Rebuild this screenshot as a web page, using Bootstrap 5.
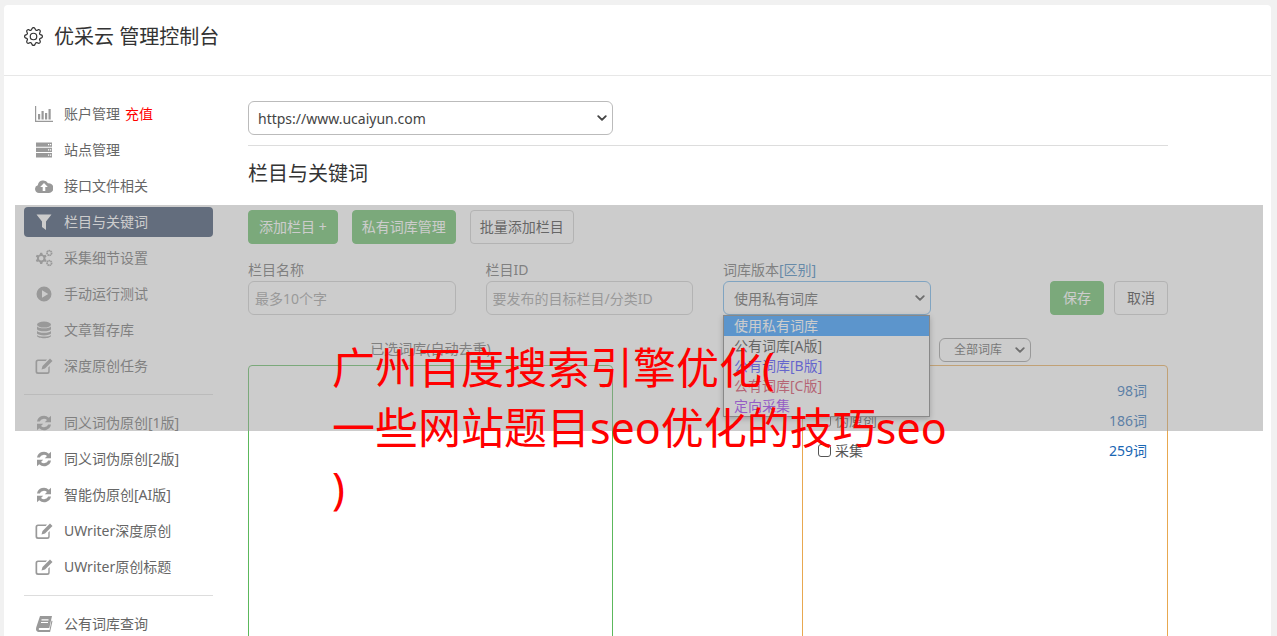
<!DOCTYPE html>
<html lang="zh-CN">
<head>
    <meta charset="UTF-8">
    <title>优采云 管理控制台</title>
    <link href="https://cdn.jsdelivr.net/npm/bootstrap@5.3.2/dist/css/bootstrap.min.css" rel="stylesheet">
    <style>
        html, body { height: 100%; overflow: hidden; }
        body { background: #f1f1f1; font-family: "Noto Sans", "Noto Sans CJK SC", sans-serif; font-size: 14px; color: #555; }
        .shell { position: relative; height: 636px; overflow: hidden; padding: 5px 6px 0 4px; }
        .panel { background: #fff; border-radius: 4px 4px 0 0; height: 700px; }
        .panel-top { height: 71px; border-bottom: 1px solid #e7e7e7; padding: 0 0 6px 20px; font-size: 20px; color: #333; }
        .panel-top svg { width: 19px; height: 19px; margin-right: 11px; margin-top: -2px; }
        .side { width: 189px; margin-left: 20px; padding-top: 23px; }
        .side .nav-link { height: 30px; margin-bottom: 6px; padding: 0 0 2px 11px; border-radius: 4px; color: #666; font-size: 14px; display: flex; align-items: center; }
        .side .nav-link svg { width: 18px; height: 18px; margin-right: 11px; margin-top: 2px; fill: #999; flex: none; }
        .side .nav-link.active { background: #2c4060; color: #fff; }
        .side .nav-link.active svg { fill: #fff; }
        .side .recharge { color: #f00; margin-left: 5px; }
        .side-rule { height: 1px; background: #ddd; margin: 7px 0 13px; }
        .main-area { width: 920px; margin-left: 35px; padding-top: 25px; }
        .form-select { background-image: url("data:image/svg+xml,%3csvg xmlns='http://www.w3.org/2000/svg' viewBox='0 0 16 16'%3e%3cpath fill='none' stroke='%23444' stroke-linecap='round' stroke-linejoin='round' stroke-width='3' d='m2 5 6 6 6-6'/%3e%3c/svg%3e"); background-size: 10px 10px; background-position: right 5px center; }
        .site-select { width: 365px; height: 34px; padding: 0 9px; font-size: 14px; color: #444; border-color: #bbb; }
        .main-rule { height: 1px; background: #ddd; margin-top: 10px; }
        .main-title { font-size: 20px; line-height: 28px; color: #333; margin: 14px 0 22px; font-weight: 400; }
        .act-row { gap: 14px; }
        .act-btn { height: 34px; padding: 0 9px; font-size: 14px; line-height: 32px; border-radius: 4px; }
        .act-first { padding: 0 10px; }
        .act-wide { padding: 0 12px; }
        .act-pair { gap: 10px; }
        .act-green { background: #5cb85c; border-color: #5cb85c; color: #fff; }
        .act-plain { background: #fff; border-color: #ccc; color: #333; }
        .field-row { margin-top: 16px; }
        .field-box { width: 207.5px; margin-right: 30px; }
        .field-box label { display: block; line-height: 20px; margin-bottom: 1px; color: #666; }
        .field-box label span { color: #337ab7; }
        .field-input { height: 34px; padding: 0 6px; font-size: 14px; border-color: #ccc; color: #555; }
        .field-input::placeholder { color: #999; }
        select.field-input { padding: 0 10px; }
        .field-open { border-color: #66afe9; }
        .dict-cols { margin-top: 23px; }
        .dict-col { width: 365px; }
        .dict-wide { width: 366px; }
        .dict-head { height: 27px; line-height: 22px; text-align: center; color: #666; }
        .dict-filter { width: 92px; height: 24px; margin-left: 137px; padding: 0 4px 0 14px; font-size: 12px; border-color: #999; color: #555; }
        .dict-box { height: 400px; border: 1px solid; border-radius: 4px; padding: 9px 20px 0 15px; }
        .dict-green { border-color: #5cb85c; }
        .dict-orange { border-color: #e8a850; }
        .dict-item { height: 30px; }
        .dict-item .tick { width: 13px; height: 13px; border: 1px solid #555; border-radius: 3px; margin-right: 4px; }
        .dict-item .count { color: #1a66b3; margin-left: auto; }
        .opt-list { position: absolute; left: 723px; top: 315px; width: 207px; height: 102px; background: #fff; border: 1px solid #767676; box-shadow: 0 2px 6px rgba(0,0,0,.35); }
        .opt-list div { height: 20px; line-height: 20px; padding-left: 10px; color: #333; }
        .opt-list .opt-on { background: #1e90ff; color: #fff; }
        .opt-list .opt-b { color: #3030ff; }
        .opt-list .opt-c { color: #d03050; }
        .opt-list .opt-d { color: #9020f0; }
        .dim-layer { position: absolute; left: 15px; top: 205px; width: 1248px; height: 226px; background: rgba(153,153,153,.5); }
        .big-title { position: absolute; left: 332px; top: 338px; width: 640px; font-size: 43px; line-height: 60px; color: #f00; }
    </style>
</head>
<body>
    <svg width="0" height="0" class="d-block position-absolute">
        <symbol id="i-chart" viewBox="0 0 18 18"><path d="M0 1h1.200v14.800H18V17H0z"/><path d="M3 9h2.200v5.500H3zM6.500 6h2.200v8.500H6.500zM10 8h2.200v6.500H10zM13.500 4h2.200v10.500h-2.200z"/></symbol>
        <symbol id="i-server" viewBox="0 0 18 18"><path fill-rule="evenodd" d="M1 1.500h16v4.300H1zM13 3v1.200h1.200V3zM15 3v1.200h1.200V3zM1 6.800h16v4.300H1zM13 8.300v1.200h1.200V8.300zM15 8.300v1.200h1.200V8.300zM1 12.100h16v4.300H1zM13 13.600v1.200h1.200v-1.200zM15 13.600v1.200h1.200v-1.200z"/></symbol>
        <symbol id="i-cloud" viewBox="0 0 18 18"><path fill-rule="evenodd" d="M4 16a4 4 0 0 1-1.200-7.800A5.500 5.500 0 0 1 13 6.200 4.900 4.900 0 0 1 14 16zM9 6l-3.800 3.900h2.500V14h2.600V9.900h2.500z"/></symbol>
        <symbol id="i-filter" viewBox="0 0 18 18"><path d="M1.500 1.500h15l-5.500 7v8.500l-4-3V8.500z"/></symbol>
        <symbol id="i-cogs" viewBox="0 0 18 18"><path fill-rule="evenodd" d="M5.200 3.800h2l.5 1.700 1.300.7 1.600-.5 1 1.700-1.200 1.200v1.500l1.200 1.200-1 1.700-1.600-.5-1.300.7-.5 1.700h-2l-.5-1.700-1.300-.7-1.600.5-1-1.700 1.200-1.200V8.600L.8 7.400l1-1.700 1.600.5 1.300-.7zM6.200 7a2.300 2.300 0 1 0 0 4.600 2.300 2.300 0 0 0 0-4.600z"/><circle cx="14.300" cy="4" r="2.300" fill="none" stroke="#999" stroke-width="1.800" stroke-dasharray="1.400 .4"/><circle cx="14.300" cy="14" r="2.300" fill="none" stroke="#999" stroke-width="1.800" stroke-dasharray="1.400 .4"/></symbol>
        <symbol id="i-play" viewBox="0 0 18 18"><path fill-rule="evenodd" d="M9 1.500a7.500 7.500 0 1 0 0 15 7.500 7.500 0 0 0 0-15zM7 5.200l6.200 3.800L7 12.800z"/></symbol>
        <symbol id="i-db" viewBox="0 0 18 18"><ellipse cx="9" cy="3.600" rx="7" ry="3"/><path d="M2 5.300C3 8 15 8 16 5.300V8.300C15 11 3 11 2 8.300zM2 9.800C3 12.500 15 12.500 16 9.800V12.600C15 15 3 15 2 12.600zM2 14C3 16 15 16 16 14V15C15 18 3 18 2 15z"/></symbol>
        <symbol id="i-edit" viewBox="0 0 18 18"><path d="M3 2.500h9l-1.300 1.400H3.200a1 1 0 0 0-1 1v9.400a1 1 0 0 0 1 1h9.100a1 1 0 0 0 1-1V10.500l1.400-1.400v5.400a2.500 2.500 0 0 1-2.500 2.500H3a2.500 2.500 0 0 1-2.500-2.500V5a2.500 2.500 0 0 1 2.500-2.500z"/><path d="M15 1.500l2.500 2.500-7.500 7.500-3.500 1 1-3.500z"/></symbol>
        <symbol id="i-sync" viewBox="0 0 18 18"><path d="M2 7.500A7 7 0 0 1 13.800 3.800L16 1.800V8.300H9.800l2.200-2.200A4.500 4.500 0 0 0 4.800 7.500zM16 10.500A7 7 0 0 1 4.200 14.200L2 16.200V9.700h6.200L6 11.900a4.500 4.500 0 0 0 7.200-1.400z"/></symbol>
        <symbol id="i-book" viewBox="0 0 18 18"><path fill-rule="evenodd" d="M5 1h12l-2.700 12H4.600c-1.100 0-1.200 2 0 2h9.900l2-9.500 1 .5-2.400 11H3.500C1.300 17 .6 14.800 1.200 12.500zM6.500 4.200V5.400h7V4.200zM6 6.900v1.200h7V6.900z"/></symbol>
    </svg>

    <div class="shell">
        <div class="panel">
            <div class="panel-top d-flex align-items-center">
                <svg viewBox="0 0 16 16" fill="#333"><path d="M8 4.754a3.246 3.246 0 1 0 0 6.492 3.246 3.246 0 0 0 0-6.492zM5.754 8a2.246 2.246 0 1 1 4.492 0 2.246 2.246 0 0 1-4.492 0z"/><path d="M9.796 1.343c-.527-1.790-3.065-1.790-3.592 0l-.094.319a.873.873 0 0 1-1.255.52l-.292-.16c-1.640-.892-3.433.902-2.540 2.541l.159.292a.873.873 0 0 1-.52 1.255l-.319.094c-1.790.527-1.790 3.065 0 3.592l.319.094a.873.873 0 0 1 .52 1.255l-.16.292c-.892 1.640.901 3.434 2.541 2.540l.292-.159a.873.873 0 0 1 1.255.52l.094.319c.527 1.790 3.065 1.790 3.592 0l.094-.319a.873.873 0 0 1 1.255-.52l.292.16c1.640.893 3.434-.902 2.540-2.541l-.159-.292a.873.873 0 0 1 .52-1.255l.319-.094c1.790-.527 1.790-3.065 0-3.592l-.319-.094a.873.873 0 0 1-.52-1.255l.16-.292c.893-1.640-.902-3.433-2.541-2.540l-.292.159a.873.873 0 0 1-1.255-.52l-.094-.319zm-2.633.283c.246-.835 1.428-.835 1.674 0l.094.319a1.873 1.873 0 0 0 2.693 1.115l.291-.16c.764-.415 1.600.42 1.184 1.185l-.159.292a1.873 1.873 0 0 0 1.116 2.692l.318.094c.835.246.835 1.428 0 1.674l-.319.094a1.873 1.873 0 0 0-1.115 2.693l.16.291c.415.764-.42 1.600-1.185 1.184l-.291-.159a1.873 1.873 0 0 0-2.693 1.116l-.094.318c-.246.835-1.428.835-1.674 0l-.094-.319a1.873 1.873 0 0 0-2.692-1.115l-.292.16c-.764.415-1.600-.42-1.184-1.185l.159-.291A1.873 1.873 0 0 0 1.945 8.930l-.319-.094c-.835-.246-.835-1.428 0-1.674l.319-.094A1.873 1.873 0 0 0 3.060 4.377l-.16-.292c-.415-.764.42-1.600 1.185-1.184l.292.159a1.873 1.873 0 0 0 2.692-1.115l.094-.319z"/></svg>
                优采云 管理控制台
            </div>
            <div class="d-flex">
                <div class="side">
                    <nav class="nav nav-pills flex-column">
                        <a class="nav-link" href="#"><svg><use href="#i-chart"/></svg>账户管理<span class="recharge">充值</span></a>
                        <a class="nav-link" href="#"><svg><use href="#i-server"/></svg>站点管理</a>
                        <a class="nav-link" href="#"><svg><use href="#i-cloud"/></svg>接口文件相关</a>
                        <a class="nav-link active" href="#"><svg><use href="#i-filter"/></svg>栏目与关键词</a>
                        <a class="nav-link" href="#"><svg><use href="#i-cogs"/></svg>采集细节设置</a>
                        <a class="nav-link" href="#"><svg><use href="#i-play"/></svg>手动运行测试</a>
                        <a class="nav-link" href="#"><svg><use href="#i-db"/></svg>文章暂存库</a>
                        <a class="nav-link" href="#"><svg><use href="#i-edit"/></svg>深度原创任务</a>
                    </nav>
                    <div class="side-rule"></div>
                    <nav class="nav nav-pills flex-column">
                        <a class="nav-link" href="#"><svg><use href="#i-sync"/></svg>同义词伪原创[1版]</a>
                        <a class="nav-link" href="#"><svg><use href="#i-sync"/></svg>同义词伪原创[2版]</a>
                        <a class="nav-link" href="#"><svg><use href="#i-sync"/></svg>智能伪原创[AI版]</a>
                        <a class="nav-link" href="#"><svg><use href="#i-edit"/></svg>UWriter深度原创</a>
                        <a class="nav-link" href="#"><svg><use href="#i-edit"/></svg>UWriter原创标题</a>
                    </nav>
                    <div class="side-rule"></div>
                    <nav class="nav nav-pills flex-column">
                        <a class="nav-link" href="#"><svg><use href="#i-book"/></svg>公有词库查询</a>
                    </nav>
                </div>

                <div class="main-area">
                    <select class="form-select site-select"><option>https://www.ucaiyun.com</option></select>
                    <div class="main-rule"></div>
                    <h5 class="main-title">栏目与关键词</h5>

                    <div class="d-flex act-row">
                        <button class="btn act-btn act-first act-green">添加栏目 +</button>
                        <button class="btn act-btn act-green">私有词库管理</button>
                        <button class="btn act-btn act-plain">批量添加栏目</button>
                    </div>

                    <div class="d-flex align-items-end field-row">
                        <div class="field-box">
                            <label>栏目名称</label>
                            <input class="form-control field-input" placeholder="最多10个字">
                        </div>
                        <div class="field-box">
                            <label>栏目ID</label>
                            <input class="form-control field-input" placeholder="要发布的目标栏目/分类ID">
                        </div>
                        <div class="field-box">
                            <label>词库版本<span>[区别]</span></label>
                            <select class="form-select field-input field-open"><option>使用私有词库</option></select>
                        </div>
                        <div class="ms-auto d-flex act-pair">
                            <button class="btn act-btn act-wide act-green">保存</button>
                            <button class="btn act-btn act-wide act-plain">取消</button>
                        </div>
                    </div>

                    <div class="d-flex justify-content-between dict-cols">
                        <div class="dict-col">
                            <div class="dict-head">已选词库(自动去重)</div>
                            <div class="dict-box dict-green"></div>
                        </div>
                        <div class="dict-wide">
                            <div class="dict-head d-flex">
                                <select class="form-select dict-filter"><option>全部词库</option></select>
                            </div>
                            <div class="dict-box dict-orange">
                                <div class="dict-item d-flex align-items-center"><span class="tick"></span>同义词<span class="count">98词</span></div>
                                <div class="dict-item d-flex align-items-center"><span class="tick"></span>伪原创<span class="count">186词</span></div>
                                <div class="dict-item d-flex align-items-center"><span class="tick"></span>采集<span class="count">259词</span></div>
                            </div>
                        </div>
                    </div>
                </div>
            </div>
        </div>

        <div class="opt-list">
            <div class="opt-on">使用私有词库</div>
            <div>公有词库[A版]</div>
            <div class="opt-b">公有词库[B版]</div>
            <div class="opt-c">公有词库[C版]</div>
            <div class="opt-d">定向采集</div>
        </div>
        <div class="dim-layer"></div>
        <div class="big-title">广州百度搜索引擎优化(<br>一些网站题目seo优化的技巧seo<br>)</div>
    </div>

    <script src="https://cdn.jsdelivr.net/npm/bootstrap@5.3.2/dist/js/bootstrap.bundle.min.js"></script>
</body>
</html>
